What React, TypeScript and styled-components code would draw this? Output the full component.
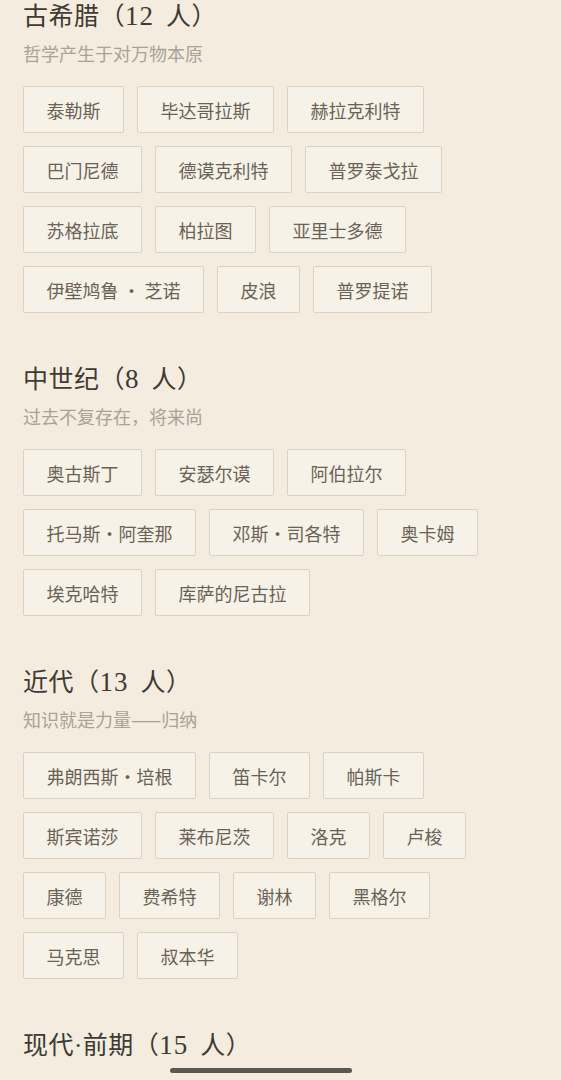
import styled, { createGlobalStyle } from "styled-components";

interface Era {
  name: string;
  count: number;
  motto?: string;
  people: string[];
}

const eras: Era[] = [
  {
    name: "古希腊",
    count: 12,
    motto: "哲学产生于对万物本原",
    people: [
      "泰勒斯",
      "毕达哥拉斯",
      "赫拉克利特",
      "巴门尼德",
      "德谟克利特",
      "普罗泰戈拉",
      "苏格拉底",
      "柏拉图",
      "亚里士多德",
      "伊壁鸠鲁 ・ 芝诺",
      "皮浪",
      "普罗提诺",
    ],
  },
  {
    name: "中世纪",
    count: 8,
    motto: "过去不复存在，将来尚",
    people: [
      "奥古斯丁",
      "安瑟尔谟",
      "阿伯拉尔",
      "托马斯・阿奎那",
      "邓斯・司各特",
      "奥卡姆",
      "埃克哈特",
      "库萨的尼古拉",
    ],
  },
  {
    name: "近代",
    count: 13,
    motto: "知识就是力量——归纳",
    people: [
      "弗朗西斯・培根",
      "笛卡尔",
      "帕斯卡",
      "斯宾诺莎",
      "莱布尼茨",
      "洛克",
      "卢梭",
      "康德",
      "费希特",
      "谢林",
      "黑格尔",
      "马克思",
      "叔本华",
    ],
  },
  {
    name: "现代·前期",
    count: 15,
    people: [],
  },
];

function App() {
  return (
    <>
      <GlobalStyle />
      <StPage.Wrapper>
        {eras.map((era) => (
          <StPage.Section key={era.name}>
            <StPage.Title>
              {era.name}（<span className="count">{era.count}</span>人）
            </StPage.Title>
            {era.motto && <StPage.Motto>{era.motto}</StPage.Motto>}
            {era.people.length > 0 && (
              <StPage.ChipList>
                {era.people.map((p) => (
                  <StPage.Chip key={p}>{p}</StPage.Chip>
                ))}
              </StPage.ChipList>
            )}
          </StPage.Section>
        ))}
      </StPage.Wrapper>
      <StPage.HomeBar />
    </>
  );
}

export default App;

const GlobalStyle = createGlobalStyle`
  html, body {
    margin: 0;
    padding: 0;
    height: 1080px;
    overflow: hidden;
    background-color: #f3ecdf;
  }
  body {
    font-family: "Noto Sans CJK SC", "Noto Sans", sans-serif;
  }
`;

const StPage = {
  Wrapper: styled.div`
    display: flex;
    flex-direction: column;
    gap: 50px;
    padding: 0 23px;
  `,
  Section: styled.section`
    display: flex;
    flex-direction: column;
  `,
  Title: styled.h2`
    margin: 0;
    font-family: "Liberation Serif", "Noto Sans CJK SC", serif;
    font-size: 25px;
    font-weight: 400;
    line-height: 32px;
    color: #403a33;
    letter-spacing: 0.5px;
    .count {
      font-size: 27px;
      margin-right: 12px;
      letter-spacing: 1px;
    }
  `,
  Motto: styled.div`
    margin-top: 8px;
    font-size: 18px;
    line-height: 24px;
    color: #aaa296;
  `,
  ChipList: styled.div`
    display: flex;
    flex-wrap: wrap;
    gap: 13px;
    margin-top: 21px;
  `,
  Chip: styled.div`
    box-sizing: border-box;
    height: 47px;
    padding: 0 22.5px;
    display: flex;
    align-items: center;
    justify-content: center;
    white-space: nowrap;
    font-size: 18px;
    color: #6a6257;
    background-color: #f7f2e8;
    border: 1px solid #dcd2bf;
    border-radius: 2px;
  `,
  HomeBar: styled.div`
    position: fixed;
    left: 170px;
    bottom: 7px;
    width: 182px;
    height: 5px;
    border-radius: 3px;
    background-color: #5a5850;
  `,
};
